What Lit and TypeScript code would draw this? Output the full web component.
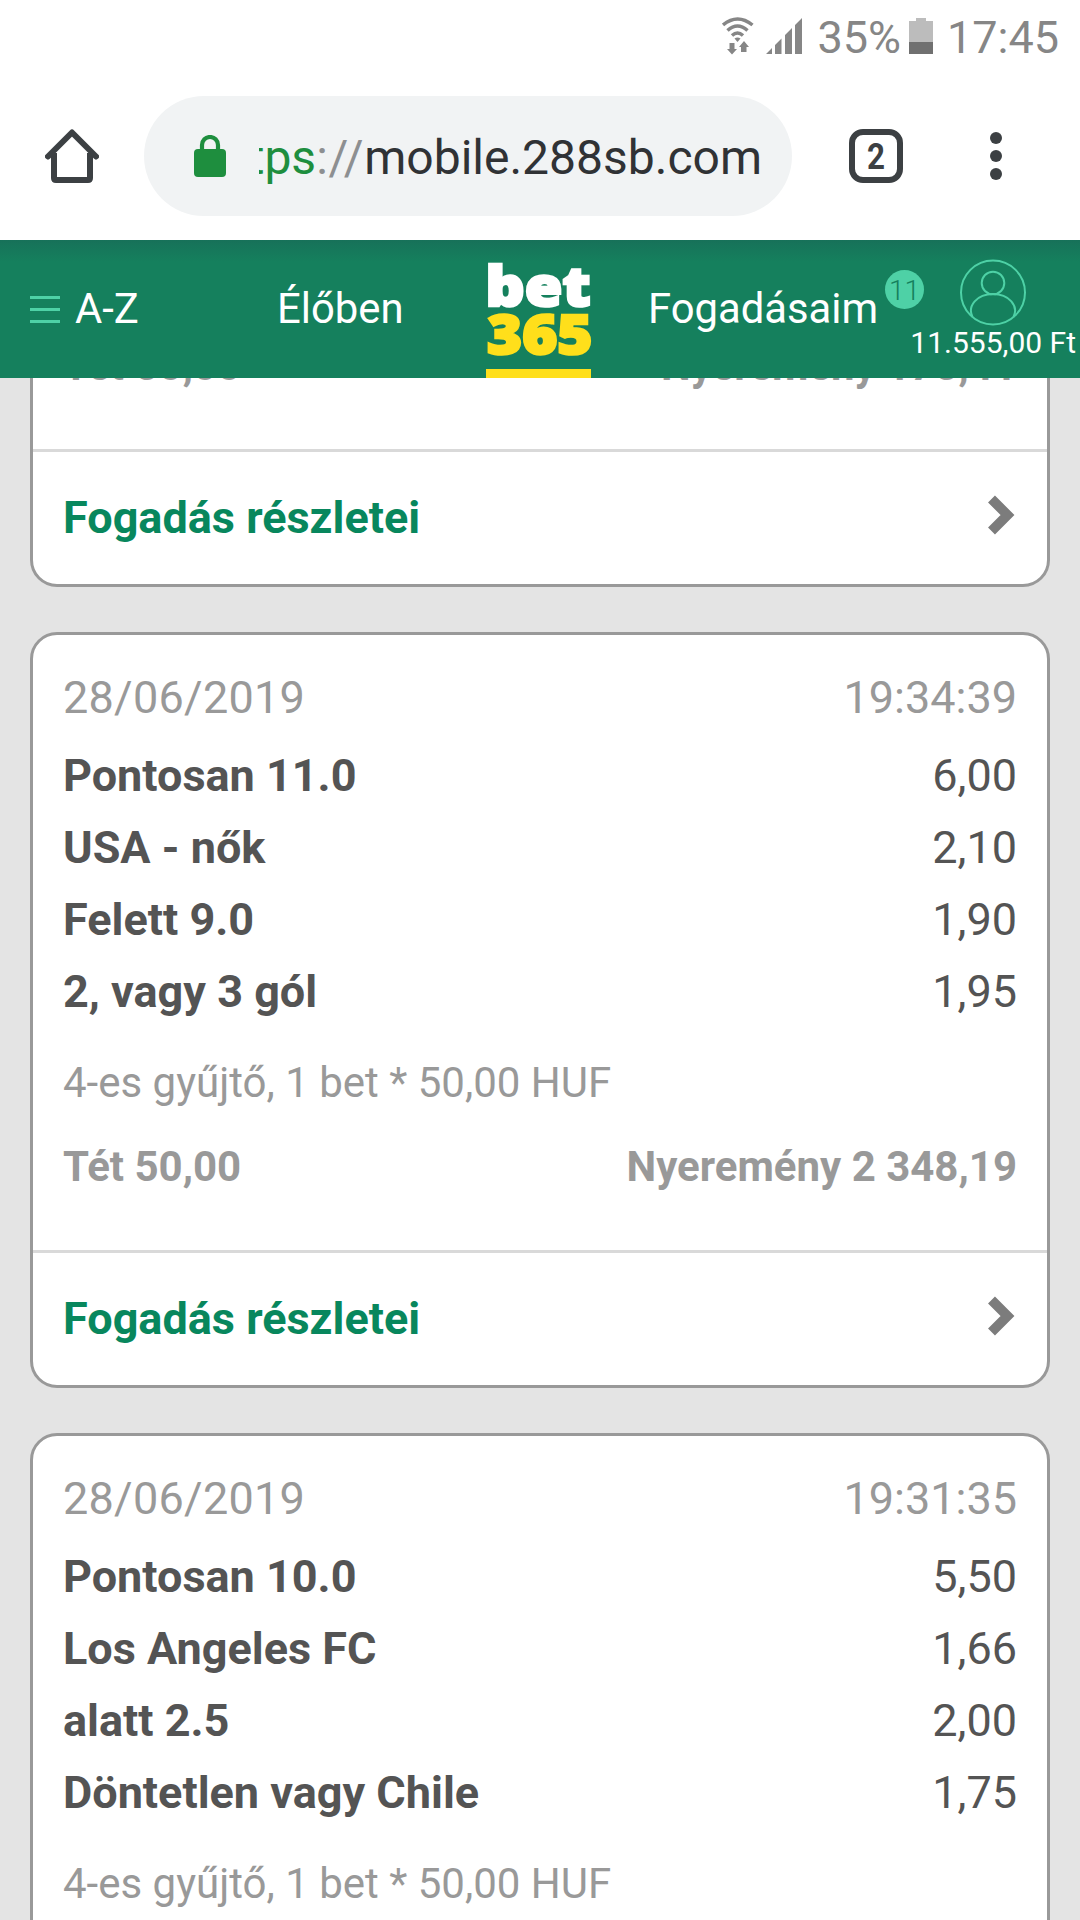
import { LitElement, html, css, nothing } from "lit";
import { customElement, property } from "lit/decorators.js";

interface Leg {
  name: string;
  odds: string;
}

interface Bet {
  date?: string;
  time?: string;
  legs?: Leg[];
  kind?: string;
  stake?: string;
  win?: string;
}

const BETS: Bet[] = [
  { stake: "50,00", win: "175,41" },
  {
    date: "28/06/2019",
    time: "19:34:39",
    legs: [
      { name: "Pontosan 11.0", odds: "6,00" },
      { name: "USA - nők", odds: "2,10" },
      { name: "Felett 9.0", odds: "1,90" },
      { name: "2, vagy 3 gól", odds: "1,95" },
    ],
    kind: "4-es gyűjtő, 1 bet * 50,00 HUF",
    stake: "50,00",
    win: "2 348,19",
  },
  {
    date: "28/06/2019",
    time: "19:31:35",
    legs: [
      { name: "Pontosan 10.0", odds: "5,50" },
      { name: "Los Angeles FC", odds: "1,66" },
      { name: "alatt 2.5", odds: "2,00" },
      { name: "Döntetlen vagy Chile", odds: "1,75" },
    ],
    kind: "4-es gyűjtő, 1 bet * 50,00 HUF",
  },
];

@customElement("status-bar")
export class StatusBar extends LitElement {
  static styles = css`
    :host {
      display: flex;
      height: 72px;
      box-sizing: border-box;
      padding: 0 21px 0 0;
      justify-content: flex-end;
      align-items: flex-start;
      color: #868686;
      font-size: 45px;
      line-height: 75px;
    }
    svg { display: block; margin-top: 17px; }
    .wifi { margin-right: 12px; }
    .signal { margin-right: 14px; }
    .battery { margin: 17px 14px 0 8px; }
  `;

  render() {
    return html`
      <svg class="wifi" width="32" height="38" viewBox="0 0 32 38">
        <g fill="none" stroke="#868686" stroke-width="3.500">
          <path d="M1 8 Q15.500 -4 30.500 8" />
          <path d="M5.500 13.500 Q15.500 4.500 25.500 13.500" />
          <path d="M10 18.500 Q15.500 13.500 21 18.500" />
        </g>
        <path d="M12.500 21.500 Q15.500 19.500 18.500 21.500 L15.500 25 Z" fill="#868686" />
        <path d="M7.500 26 H12.500 V32 H15 L10 37.500 L5 32 H7.500 Z M19 35 H24.500 V30 H27 L22 24 L17 30 H19 Z" fill="#868686" />
      </svg>
      <svg class="signal" width="37" height="38" viewBox="0 0 37 38">
        <path d="M0 37 L6 31 V37 Z M9 28 L15.500 21.500 V37 H9 Z M19 18 L26 11 V37 H19 Z M29 8 L36 1 V37 H29 Z" fill="#868686" />
      </svg>
      <span>35%</span>
      <svg class="battery" width="24" height="38" viewBox="0 0 24 38">
        <path d="M7 1 H17 V4 H24 V25 H0 V4 H7 Z" fill="#bcbcbc" />
        <rect y="25" width="24" height="12" fill="#707070" />
      </svg>
      <span>17:45</span>
    `;
  }
}

@customElement("browser-bar")
export class BrowserBar extends LitElement {
  static styles = css`
    :host {
      display: flex;
      height: 168px;
      box-sizing: border-box;
      padding: 24px 78px 24px 45px;
      align-items: center;
    }
    svg { display: block; flex: none; }
    .field {
      display: flex;
      align-items: center;
      box-sizing: border-box;
      width: 648px;
      height: 120px;
      margin: 0 57px 0 45px;
      padding: 0 0 0 50px;
      border-radius: 60px;
      background: #f1f3f4;
      font-size: 48px;
      line-height: 118px;
      color: #303235;
    }
    .url {
      display: flex;
      justify-content: flex-end;
      width: 503px;
      margin-left: 33px;
      padding-top: 3px;
      overflow: hidden;
      white-space: nowrap;
    }
    .secure { color: #1e8e3e; }
    .sep { color: #8d8f91; letter-spacing: 0.700px; }
    .tabs { margin-right: 87px; }
  `;

  render() {
    return html`
      <svg width="54" height="54" viewBox="0 0 54 54" fill="none" stroke="#3c4043" stroke-width="6">
        <path d="M3 27.500 L27 3.500 L51 27.500" stroke-linecap="round" stroke-linejoin="round" />
        <path d="M9 24 V49 Q9 51 11 51 H43 Q45 51 45 49 V24" />
      </svg>
      <div class="field">
        <svg width="32" height="42" viewBox="0 0 32 42">
          <rect y="14" width="32" height="28" rx="4" fill="#1e8e3e" />
          <path d="M8 16 V10 a8 8 0 0 1 16 0 V16" fill="none" stroke="#1e8e3e" stroke-width="4.200" />
        </svg>
        <div class="url"><span class="secure">https</span><span class="sep">://</span><span>mobile.288sb.com</span></div>
      </div>
      <svg class="tabs" width="54" height="54" viewBox="0 0 54 54">
        <rect x="3" y="3" width="48" height="48" rx="11" fill="none" stroke="#3c4043" stroke-width="6" />
        <text x="18" y="39.500" font-size="36" font-weight="700" fill="#3c4043" textLength="18" lengthAdjust="spacingAndGlyphs">2</text>
      </svg>
      <svg width="12" height="48" viewBox="0 0 12 48" fill="#3c4043">
        <circle cx="6" cy="6" r="6" /><circle cx="6" cy="24" r="6" /><circle cx="6" cy="42" r="6" />
      </svg>
    `;
  }
}

@customElement("site-header")
export class SiteHeader extends LitElement {
  static styles = css`
    :host {
      display: grid;
      position: relative;
      z-index: 1;
      grid-template-columns: 277px 209px 162px 237px 195px;
      height: 138px;
      background: linear-gradient(#177159, #15805d 22px);
      color: #fff;
      font-size: 41.800px;
      line-height: 138px;
      white-space: nowrap;
    }
    svg { display: block; }
    .menu { display: flex; align-items: center; gap: 15px; padding-left: 30px; }
    .account { position: relative; }
    .badge {
      position: absolute;
      left: 0;
      top: 30px;
      width: 39px;
      height: 39px;
      border-radius: 50%;
      background: #4ed1a6;
      color: #15805d;
      font-size: 28px;
      font-weight: 300;
      line-height: 41px;
      text-align: center;
    }
    .avatar { margin: 18px 0 0 74px; }
    .balance { display: block; padding-right: 4px; font-size: 30px; line-height: 34px; text-align: right; }
  `;

  render() {
    return html`
      <div class="menu">
        <svg width="30" height="27" fill="#4ed1a6">
          <rect width="30" height="3" /><rect y="12" width="30" height="3" /><rect y="24" width="30" height="3" />
        </svg>
        <span>A-Z</span>
      </div>
      <div>Élőben</div>
      <svg width="108" height="138" font-family="Open Sans" font-weight="800" stroke-width="2.600">
        <text x="-0.500" y="65.500" font-size="55.500" fill="#fff" stroke="#fff" textLength="105" lengthAdjust="spacingAndGlyphs">bet</text>
        <text x="1" y="113.500" font-size="54.500" fill="#ffdf1b" stroke="#ffdf1b" textLength="105.500" lengthAdjust="spacingAndGlyphs">365</text>
        <rect y="129" width="105" height="9" fill="#ffdf1b" />
      </svg>
      <div>Fogadásaim</div>
      <div class="account">
        <span class="badge">11</span>
        <svg class="avatar" width="68" height="68" viewBox="0 0 68 68" fill="none" stroke="#4ed1a6" stroke-width="2">
          <circle cx="34" cy="34.500" r="32" />
          <circle cx="34" cy="25" r="11.300" />
          <path d="M13.500 59 C8 48 18 36 34 36 C50 36 60 48 54.500 59" />
        </svg>
        <span class="balance">11.555,00 Ft</span>
      </div>
    `;
  }
}

@customElement("bet-card")
export class BetCard extends LitElement {
  @property({ attribute: false }) bet!: Bet;

  static styles = css`
    :host {
      display: block;
      flex: none;
      box-sizing: border-box;
      border: 3px solid #999;
      border-radius: 27px;
      background: #fff;
      font-size: 45px;
      line-height: 72px;
      color: #545454;
    }
    .body { padding: 9px 30px 53px; }
    .row { display: flex; justify-content: space-between; }
    .muted { color: #999; }
    .when { margin-top: 18px; }
    .date { letter-spacing: 0.270px; }
    .legs { margin-top: 6px; }
    .name, .total, .footer { font-weight: 700; }
    .kind { margin: 25px 0 24px; font-size: 42px; line-height: 60px; }
    .total { font-size: 42px; line-height: 60px; }
    .rule { height: 3px; background: #d9d9d9; }
    .footer {
      display: flex;
      justify-content: space-between;
      align-items: center;
      height: 132px;
      padding: 0 32px 0 30px;
      color: #08875d;
    }
    .chevron { display: block; margin-bottom: 6px; filter: blur(0.700px); }
  `;

  render() {
    const b = this.bet;
    return html`
      <div class="body">
        ${b.legs
          ? html`
              <div class="row muted when"><span class="date">${b.date}</span><span>${b.time}</span></div>
              <div class="legs">
                ${b.legs.map((l) => html`<div class="row"><span class="name">${l.name}</span><span>${l.odds}</span></div>`)}
              </div>
              <div class="kind muted">${b.kind}</div>
            `
          : nothing}
        ${b.stake
          ? html`<div class="row total muted"><span>Tét ${b.stake}</span><span>Nyeremény ${b.win}</span></div>`
          : nothing}
      </div>
      ${b.stake
        ? html`
            <div class="rule"></div>
            <div class="footer">
              <span>Fogadás részletei</span>
              <svg class="chevron" width="27" height="40" viewBox="0 0 27 40">
                <path d="M3.500 4 L19.500 20 L3.500 36" fill="none" stroke="#7c7c7c" stroke-width="9.800" />
              </svg>
            </div>
          `
        : nothing}
    `;
  }
}

@customElement("app-root")
export class AppRoot extends LitElement {
  static styles = css`
    :host {
      display: flex;
      flex-direction: column;
      height: 1920px;
      overflow: hidden;
      background: #fff;
      font-family: Roboto, "Noto Sans", sans-serif;
    }
    status-bar, browser-bar, site-header { flex: none; }
    .list {
      display: flex;
      flex-direction: column;
      gap: 45px;
      flex: 1;
      min-height: 0;
      padding: 0 30px;
      overflow: hidden;
      background: #e4e4e4;
    }
    .scrolled { margin-top: -54px; }
  `;

  render() {
    return html`
      <status-bar></status-bar>
      <browser-bar></browser-bar>
      <site-header></site-header>
      <div class="list">
        ${BETS.map((b, i) => html`<bet-card class=${i === 0 ? "scrolled" : ""} .bet=${b}></bet-card>`)}
      </div>
    `;
  }
}
